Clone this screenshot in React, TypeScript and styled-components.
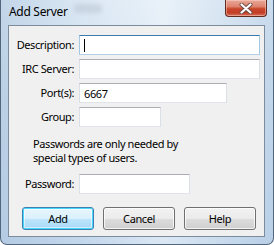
import React from 'react'
import styled, { createGlobalStyle, css } from 'styled-components'

const GlobalStyle = createGlobalStyle`
	html, body {
		margin: 0;
		padding: 0;
		background: #ffffff;
	}
	body {
		font-family: 'Noto Sans', 'Open Sans', 'DejaVu Sans', sans-serif;
		font-size: 11px;
		letter-spacing: -0.4px;
	}
`

const Window = styled.div`
	width: 274px;
	height: 245px;
	box-sizing: border-box;
	display: flex;
	flex-direction: column;
	padding: 0 7px 7px 7px;
	border: 1px solid #52677c;
	border-top: none;
	border-radius: 0 0 7px 7px;
	background:
		linear-gradient(90deg, rgba(150, 180, 210, 0.35) 0%, rgba(255, 255, 255, 0) 30%, rgba(255, 255, 255, 0.4) 60%, rgba(160, 190, 220, 0.3) 100%),
		linear-gradient(180deg, #dbe8f4 0%, #cfdfef 40%, #c3d7ec 100%);
`

const TitleBar = styled.div`
	height: 25px;
	display: flex;
	align-items: flex-start;
	margin: 0 -1px 0 0;
`

const Title = styled.span`
	margin-top: 3px;
	margin-left: 1px;
	font-size: 12px;
	letter-spacing: -0.3px;
	color: #000;
	line-height: 18px;
`

const Ghost = styled.span`
	margin-top: 4px;
	margin-left: 6px;
	width: 28px;
	height: 9px;
	border-radius: 4px;
	background: rgba(120, 130, 145, 0.18);
	filter: blur(2px);
`

const CloseButton = styled.div`
	margin-left: auto;
	width: 42px;
	height: 17px;
	box-sizing: border-box;
	border: 1px solid #5f2a20;
	border-top: none;
	border-radius: 0 0 4px 4px;
	display: flex;
	align-items: center;
	justify-content: center;
	background: linear-gradient(180deg, #e9a899 0%, #de8570 40%, #c8462c 55%, #c23e26 80%, #d8765e 100%);
	box-shadow: inset 0 0 0 1px rgba(255, 220, 210, 0.45);
`

const Client = styled.div`
	flex: 1;
	display: flex;
	flex-direction: column;
	background: #f0f0f0;
	border: 1px solid #7d8c9c;
	padding: 9px 0 0 0;
	margin-right: 1px;
`

const FormGrid = styled.div`
	display: grid;
	grid-template-columns: 65px auto;
	column-gap: 5px;
	row-gap: 4px;
	align-items: center;
	justify-items: start;
`

const Label = styled.label`
	justify-self: end;
	color: #000;
	white-space: nowrap;
	line-height: 20px;
`

const TextBox = styled.div<{ $width: number; $focused?: boolean }>`
	width: ${(p) => p.$width}px;
	height: 20px;
	box-sizing: border-box;
	background: #fff;
	border: 1px solid #e2e3ea;
	border-top-color: #abadb3;
	border-left-color: #dbdfe6;
	border-right-color: #dbdfe6;
	display: flex;
	align-items: center;
	padding-left: 4px;
	color: #000;
	${(p) =>
		p.$focused &&
		css`
			border-color: #b5cfe7;
			border-top-color: #3d7bad;
			border-left-color: #a4c9e3;
			border-right-color: #a4c9e3;
		`}
`

const Caret = styled.span`
	width: 1px;
	height: 13px;
	background: #000;
`

const Note = styled.p`
	margin: 10px 0 0 24px;
	line-height: 14px;
	color: #000;
`

const PasswordGrid = styled(FormGrid)`
	margin-top: 9px;
`

const ButtonRow = styled.div`
	display: flex;
	gap: 9px;
	margin: 13px 0 0 13px;
`

const Button = styled.button<{ $default?: boolean }>`
	width: 72px;
	height: 23px;
	box-sizing: border-box;
	padding: 0;
	font-family: inherit;
	font-size: 11px;
	letter-spacing: -0.4px;
	color: #000;
	border: 1px solid #707070;
	border-radius: 3px;
	background: linear-gradient(180deg, #f2f2f2 0%, #ebebeb 50%, #dddddd 51%, #cfcfcf 100%);
	box-shadow: inset 0 0 0 1px rgba(255, 255, 255, 0.75);
	${(p) =>
		p.$default &&
		css`
			border-color: #3c7fb1;
			background: linear-gradient(180deg, #eaf6fd 0%, #d9f0fc 50%, #bee6fd 51%, #a7d9f5 100%);
			box-shadow: inset 0 0 0 1px #48d8fb, inset 0 0 0 2px rgba(255, 255, 255, 0.5);
		`}
`

const CloseGlyph = () => (
	<svg width="14" height="11" viewBox="0 0 14 11">
		<path
			d="M2.5 1.5 L7 5.5 L11.5 1.5 M2.5 9.5 L7 5.5 L11.5 9.5"
			fill="none"
			stroke="#6a4a44"
			strokeWidth="4"
			strokeLinecap="round"
			strokeLinejoin="round"
		/>
		<path
			d="M2.5 1.5 L7 5.5 L11.5 1.5 M2.5 9.5 L7 5.5 L11.5 9.5"
			fill="none"
			stroke="#ffffff"
			strokeWidth="2.2"
			strokeLinecap="round"
			strokeLinejoin="round"
		/>
	</svg>
)

export default function App() {
	return (
		<>
			<GlobalStyle />
			<Window>
				<TitleBar>
					<Title>Add Server</Title>
					<Ghost />
					<CloseButton>
						<CloseGlyph />
					</CloseButton>
				</TitleBar>
				<Client>
					<FormGrid>
						<Label>Description:</Label>
						<TextBox $width={181} $focused>
							<Caret />
						</TextBox>
						<Label>IRC Server:</Label>
						<TextBox $width={181} />
						<Label>Port(s):</Label>
						<TextBox $width={148}>6667</TextBox>
						<Label>Group:</Label>
						<TextBox $width={82} />
					</FormGrid>
					<Note>
						Passwords are only needed by
						<br />
						special types of users.
					</Note>
					<PasswordGrid>
						<Label>Password:</Label>
						<TextBox $width={111} />
					</PasswordGrid>
					<ButtonRow>
						<Button $default>Add</Button>
						<Button>Cancel</Button>
						<Button>Help</Button>
					</ButtonRow>
				</Client>
			</Window>
		</>
	)
}
